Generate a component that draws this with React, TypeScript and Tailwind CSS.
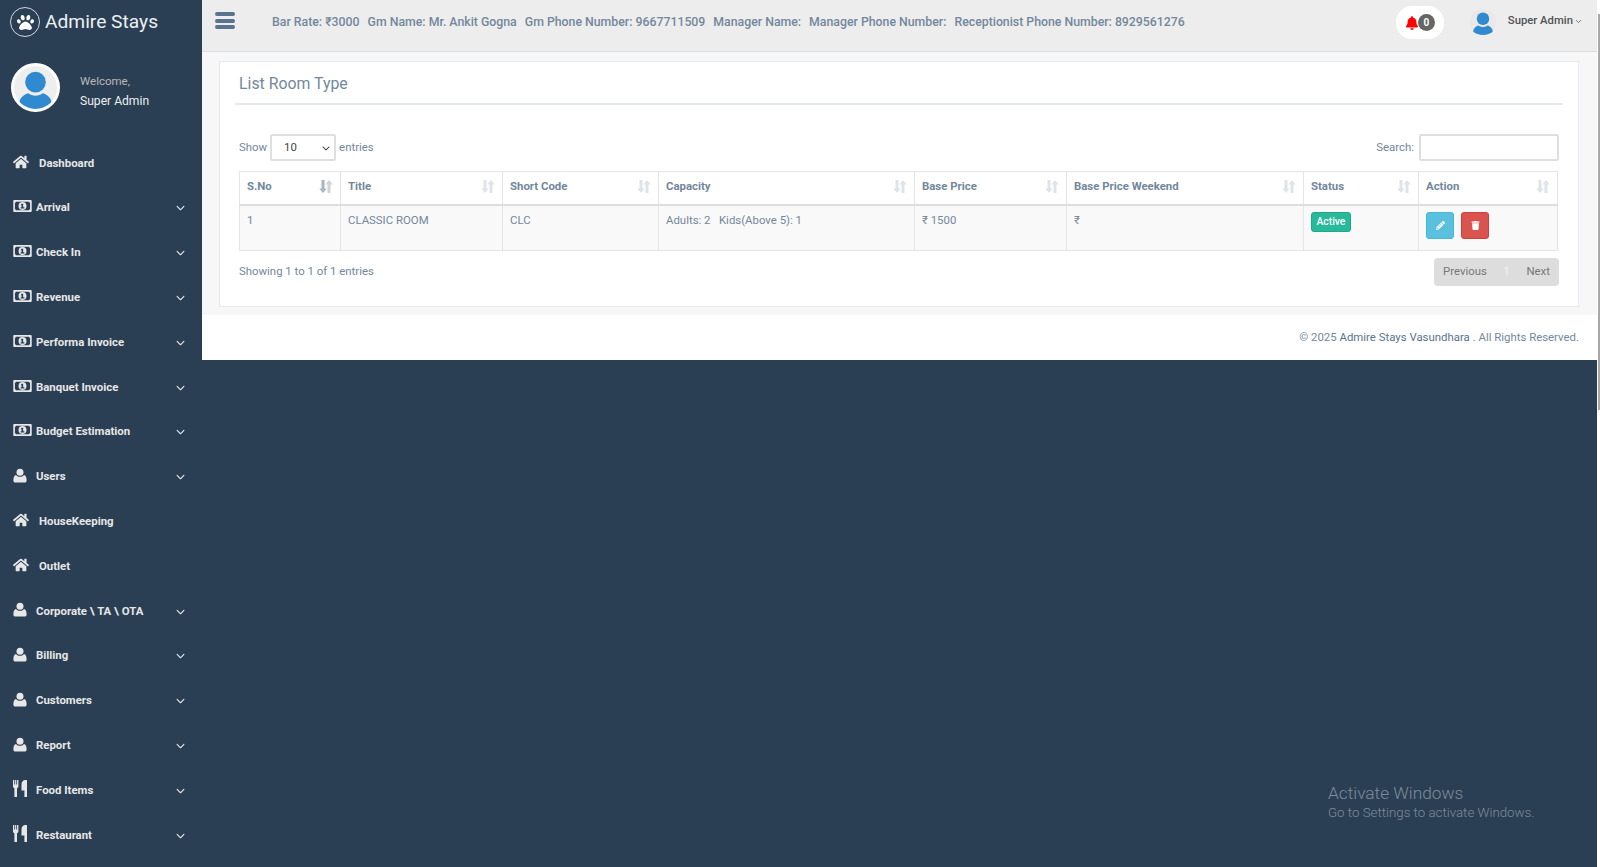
import { FaBell, FaHome, FaPaw, FaPencilAlt, FaTrash } from "react-icons/fa";
import { FaChevronDown } from "react-icons/fa6";
import { ChevronDown } from "lucide-react";

const font = "font-['Roboto','Liberation_Sans',sans-serif]";

const UserIcon = () => (
  <svg viewBox="0 0 16 16" className="w-[14px] h-[15px]" fill="currentColor">
    <circle cx="8" cy="4.200" r="4" />
    <path d="M3.400 7.400C4.600 8.900 6.200 9.500 8 9.500s3.400-.6 4.600-2.100c1.800.5 2.800 2.300 2.900 5v1.600c0 1.300-.9 2-2 2H2.500c-1.100 0-2-.7-2-2v-1.600c.1-2.700 1.100-4.500 2.900-5z" />
  </svg>
);

const MoneyIcon = () => (
  <svg viewBox="0 0 20 13" className="w-[19px] h-[12px]" fill="currentColor">
    <path
      fillRule="evenodd"
      d="M1 0h18a1 1 0 0 1 1 1v11a1 1 0 0 1-1 1H1a1 1 0 0 1-1-1V1a1 1 0 0 1 1-1zm2 1.800L1.800 3.500v6L3 11.200h14l1.200-1.700v-6L17 1.800zM10 2.200a4.300 4.300 0 1 1 0 8.600 4.300 4.300 0 0 1 0-8.600z"
    />
    <path d="M9 4h1.700v3.800H12v1.300H8V7.800h1V5.600H8z" fill="#2a3f54" />
  </svg>
);

const CutleryIcon = () => (
  <svg viewBox="0 0 14 17" className="w-[14px] h-[17px]" fill="currentColor">
    <path d="M0 0h1.300v4.500h.8V0h1.200v4.500h.8V0h1.300v6.500c0 .9-.6 1.500-1.400 1.800V17H1.400V8.300C.6 8 0 7.400 0 6.500z" />
    <path d="M8.500 4c0-2.200 1.700-4 3.700-4H14v17h-2.600v-6.500H8.500z" />
  </svg>
);

const SortIcon = ({ active }: { active?: boolean }) => (
  <svg viewBox="0 0 14 13" className="w-[14px] h-[13px]">
    <path d="M2.500 0h3v8.500h2.200L4 13 .3 8.500h2.200z" fill={active ? "#a8b4c0" : "#dfe4ea"} />
    <path d="M8.500 13h3V4.500h2.200L10 0 6.300 4.500h2.200z" fill={active ? "#cdd4db" : "#dfe4ea"} />
  </svg>
);

const AvatarArt = ({ className }: { className: string }) => (
  <svg viewBox="0 0 48 48" className={className}>
    <circle cx="24" cy="18" r="11.500" fill="#2f8ad0" />
    <path
      d="M6 42c0-6 4.500-10 10-11.500 2 1.800 5 2.800 8 2.800s6-1 8-2.800C37.500 32 42 36 42 42c-3.500 3.500-11 6-18 6S9.500 45.500 6 42z"
      fill="#2f8ad0"
    />
  </svg>
);

const MENU = [
  { label: "Arrival", icon: "money", arrow: true },
  { label: "Check In", icon: "money", arrow: true },
  { label: "Revenue", icon: "money", arrow: true },
  { label: "Performa Invoice", icon: "money", arrow: true },
  { label: "Banquet Invoice", icon: "money", arrow: true },
  { label: "Budget Estimation", icon: "money", arrow: true },
  { label: "Users", icon: "user", arrow: true },
  { label: "HouseKeeping", icon: "home" },
  { label: "Outlet", icon: "home" },
  { label: "Corporate \\ TA \\ OTA", icon: "user", arrow: true },
  { label: "Billing", icon: "user", arrow: true },
  { label: "Customers", icon: "user", arrow: true },
  { label: "Report", icon: "user", arrow: true },
  { label: "Food Items", icon: "food", arrow: true },
  { label: "Restaurant", icon: "food", arrow: true },
];

const MenuRow = ({ label, icon, arrow }: { label: string; icon: string; arrow?: boolean }) => (
  <div className="h-[44.8px] flex items-center pl-[13px] pr-[17px] text-[#E7E7E7] text-[11.4px] font-bold">
    <span className="w-[23px] flex items-center -mt-[3px]">
      {icon === "money" && <MoneyIcon />}
      {icon === "user" && <UserIcon />}
      {icon === "food" && <CutleryIcon />}
      {icon === "home" && <FaHome className="text-[16px] w-[16px]" />}
    </span>
    <span className={icon === "home" ? "ml-[3px]" : ""}>{label}</span>
    {arrow && <FaChevronDown className="ml-auto text-[9px]" />}
  </div>
);

const Sidebar = () => (
  <aside className="w-[202px] shrink-0 text-white">
    <div className="h-[44px] flex items-center pl-[10px] gap-[5px]">
      <span className="w-[30px] h-[30px] rounded-full border border-[#d6d9dc] flex items-center justify-center">
        <FaPaw className="text-[17px]" />
      </span>
      <span className="text-[19.200px] text-[#ECF0F1]">Admire Stays</span>
    </div>
    <div className="h-[76px] pt-[19px] flex items-start pl-[11px]">
      <div className="w-[49px] h-[49px] rounded-full bg-[#EEEEEE] flex items-center justify-center shrink-0 border-[3px] border-white overflow-hidden">
        <AvatarArt className="w-[43px] h-[43px]" />
      </div>
      <div className="ml-[20px] mt-[8px]">
        <p className="text-[#BAB8B8] text-[11.500px] leading-[20px]">Welcome,</p>
        <p className="text-[#ECF0F1] text-[12.100px] leading-[20px]">Super Admin</p>
      </div>
    </div>
    <nav className="mt-[20.800px]">
      <MenuRow label="Dashboard" icon="home" />
      {MENU.map((item) => (
        <MenuRow key={item.label} label={item.label} icon={item.icon} arrow={item.arrow} />
      ))}
    </nav>
  </aside>
);

const TopBar = () => (
  <header className="h-[52px] bg-[#EDEDED] border-b border-[#D9DEE4] flex items-center text-[#73879C] text-[12.300px]">
    <div className="ml-[13px] w-[20px] flex flex-col gap-[2.500px] -mt-[10px]">
      <span className="h-[4px] bg-[#5A738E] rounded-sm" />
      <span className="h-[4px] bg-[#5A738E] rounded-sm" />
      <span className="h-[4px] bg-[#5A738E] rounded-sm" />
    </div>
    <div className="ml-[37px] flex gap-[8px] font-medium -mt-[7px] whitespace-nowrap">
      <span>Bar Rate: ₹3000</span>
      <span>Gm Name: Mr. Ankit Gogna</span>
      <span>Gm Phone Number: 9667711509</span>
      <span>Manager Name:</span>
      <span>Manager Phone Number:</span>
      <span>Receptionist Phone Number: 8929561276</span>
    </div>
    <div className="ml-auto flex items-center mr-[14px]">
      <div className="w-[48px] h-[33px] rounded-[16px] bg-white flex items-center justify-center -mt-[6px]">
        <FaBell className="text-[14px] text-[#FF0000]" />
        <span className="w-[17px] h-[17px] rounded-full bg-[#666] text-white text-[10px] font-bold flex items-center justify-center -ml-[1px]">
          0
        </span>
      </div>
      <div className="ml-[26px] w-[26px] h-[26px] rounded-full bg-[#E8E8E8] flex items-center justify-center -mt-[8px]">
        <AvatarArt className="w-[26px] h-[26px]" />
      </div>
      <span className="ml-[12px] text-[#515356] text-[11.300px] font-medium -mt-[8px]">Super Admin</span>
      <ChevronDown className="ml-[1px] w-[9px] h-[9px] text-[#515356] -mt-[8px]" />
    </div>
  </header>
);

const COLS = [
  { label: "S.No", width: "w-[101px]", active: true },
  { label: "Title", width: "w-[162px]" },
  { label: "Short Code", width: "w-[156px]" },
  { label: "Capacity", width: "w-[256px]" },
  { label: "Base Price", width: "w-[152px]" },
  { label: "Base Price Weekend", width: "w-[237px]" },
  { label: "Status", width: "w-[115px]" },
  { label: "Action", width: "w-[139px]" },
];

const cell = "border border-[#E3E5E8] px-[7px] align-top";

const RoomTable = () => (
  <table className="w-[1319px] table-fixed border-collapse text-[11.400px]">
    <thead>
      <tr className="h-[33px]">
        {COLS.map((col) => (
          <th
            key={col.label}
            className={`${col.width} border border-[#E3E5E8] border-b-2 border-b-[#DDDDDD] px-[7px] pb-[2px] text-left font-bold align-middle`}
          >
            <div className="flex items-center justify-between">
              <span>{col.label}</span>
              <SortIcon active={col.active} />
            </div>
          </th>
        ))}
      </tr>
    </thead>
    <tbody>
      <tr className="h-[46px] bg-[#F9F9F9]">
        <td className={`${cell} pt-[6px]`}>1</td>
        <td className={`${cell} pt-[6px]`}>CLASSIC ROOM</td>
        <td className={`${cell} pt-[6px]`}>CLC</td>
        <td className={`${cell} pt-[6px]`}>Adults: 2 &nbsp; Kids(Above 5): 1</td>
        <td className={`${cell} pt-[6px]`}>₹ 1500</td>
        <td className={`${cell} pt-[6px]`}>₹</td>
        <td className={`${cell} pt-[6px]`}>
          <span className="inline-block h-[20px] px-[4.500px] leading-[18px] rounded-[3px] bg-[#26B99A] border border-[#1fa88b] text-white font-medium text-[10.300px] align-top">
            Active
          </span>
        </td>
        <td className={`${cell} pt-[6px]`}>
          <div className="flex gap-[7px]">
            <span className="w-[28px] h-[27px] rounded-[3px] bg-[#5BC0DE] border border-[#46b8da] flex items-center justify-center text-white">
              <FaPencilAlt className="text-[9px]" />
            </span>
            <span className="w-[28px] h-[27px] rounded-[3px] bg-[#D9534F] border border-[#d43f3a] flex items-center justify-center text-white">
              <FaTrash className="text-[9px]" />
            </span>
          </div>
        </td>
      </tr>
    </tbody>
  </table>
);

const Panel = () => (
  <section className="ml-[17px] mr-[18px] mt-[9px] h-[246px] bg-white border border-[#E6E9ED] px-[15px] pt-[10px]">
    <h2 className="border-b-2 border-[#E6E9ED] h-[33px] pl-[4px] pt-[1px] text-[15.850px] leading-[22px]">List Room Type</h2>
    <div className="pl-[4px] pr-[4px]">
      <div className="mt-[29px] flex items-center justify-between text-[11.400px] h-[27px]">
        <div className="flex items-center gap-[3px]">
          <span>Show</span>
          <span className="w-[66px] h-[27px] border-2 border-[#DFDFDF] rounded-[2px] flex items-center justify-between pl-[12px] pr-[4px] text-[#444]">
            10
            <FaChevronDown className="text-[8px] text-[#333]" />
          </span>
          <span>entries</span>
        </div>
        <div className="flex items-center gap-[5px]">
          <span>Search:</span>
          <span className="w-[140px] h-[27px] border-2 border-[#DFDFDF] rounded-[2px] bg-white" />
        </div>
      </div>
      <div className="mt-[10px]">
        <RoomTable />
      </div>
      <div className="mt-[7px] flex items-center justify-between text-[11.400px]">
        <span>Showing 1 to 1 of 1 entries</span>
        <div className="w-[125px] h-[28px] rounded-[4px] bg-[#DDDDDD] flex items-center justify-between px-[9px] text-[#777]">
          <span>Previous</span>
          <span className="text-[#F2F2F2]">1</span>
          <span>Next</span>
        </div>
      </div>
    </div>
  </section>
);

export default function App() {
  return (
    <div className={`${font} relative h-[867px] overflow-hidden flex bg-[#2A3F54] text-[#73879C]`}>
      <Sidebar />
      <main className="w-[1395px] self-start bg-[#F7F7F7]">
        <TopBar />
        <Panel />
        <footer className="mt-[8px] h-[45px] bg-white flex items-center justify-end pr-[18px] text-[11.400px]">
          <span>
            © 2025 <span className="text-[#5A738E]">Admire Stays Vasundhara</span> . All Rights Reserved.
          </span>
        </footer>
      </main>
      <div className="absolute left-[1328px] top-[781px] text-[#7F8B98]">
        <p className="text-[17.300px] font-light leading-[24px]">Activate Windows</p>
        <p className="text-[13.300px] font-light leading-[16px]">Go to Settings to activate Windows.</p>
      </div>
      {/* page scrollbar */}
      <div className="absolute right-0 top-0 bottom-0 w-[3px] bg-white">
        <div className="ml-[1px] mt-[14px] h-[396px] bg-[#A8A8A8]" />
      </div>
    </div>
  );
}
